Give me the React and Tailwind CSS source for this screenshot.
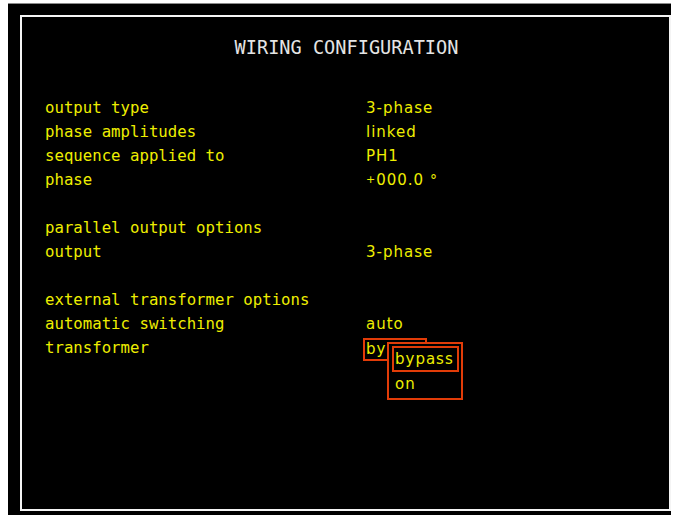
import React from "react";

function Row({ label, value, children }) {
  return (
    <div className="grid grid-cols-[321px_1fr] h-[24px]">
      <div className="h-[24px] text-[15.7px] leading-[24px] text-[#eeee00] whitespace-pre font-['DejaVu_Sans_Mono',monospace]">
        {label}
      </div>
      <div className="relative h-[24px] text-[15px] leading-[24px] tracking-[1px] text-[#eeee00] whitespace-pre font-['DejaVu_Sans',sans-serif]">
        {value}
        {children}
      </div>
    </div>
  );
}

export default function App() {
  return (
    <div className="w-[673px] h-[515px] bg-white overflow-hidden">
      <div className="ml-[8px] mt-[3px] w-[663px] h-[512px] bg-black border-t border-[#8a8a8a]">
        <div className="ml-[12px] mt-[11px] w-[651px] h-[496px] border-2 border-[#f4f4f4] bg-black">
          <div className="pt-[19px] h-[43px] flex justify-center">
            <div className="text-[18.6px] leading-[24px] text-[#e4e4e4] font-['DejaVu_Sans_Mono',monospace] pl-[2px]">
              WIRING CONFIGURATION
            </div>
          </div>
          <div className="pl-[23px] mt-[36px]">
            <Row label="output type" value="3-phase" />
            <Row label="phase amplitudes" value="linked" />
            <Row label="sequence applied to" value="PH1" />
            <Row label="phase" value={<span><span className="text-[11px] align-[2px]">+</span>000.0 <span className="text-[14px]">°</span></span>} />
            <div className="h-[24px]" />
            <Row label="parallel output options" value="" />
            <Row label="output" value="3-phase" />
            <div className="h-[24px]" />
            <Row label="external transformer options" value="" />
            <Row label="automatic switching" value="auto" />
            <Row label="transformer" value="">
              <div className="absolute left-[-3px] top-[2px] w-[64px] h-[23px] border-2 border-[#e23c08] overflow-hidden">
                <div className="pl-[1px] leading-[19px] whitespace-pre">bypass</div>
              </div>
              <div className="absolute left-[21px] top-[6px] w-[76px] h-[58px] border-2 border-[#e23c08] bg-black">
                <div className="ml-[3px] mt-[2px] w-[67px] h-[26px] border-2 border-[#e23c08] pl-[1px] leading-[22px]">
                  bypass
                </div>
                <div className="pl-[6px] leading-[24px]">on</div>
              </div>
            </Row>
          </div>
        </div>
      </div>
    </div>
  );
}
